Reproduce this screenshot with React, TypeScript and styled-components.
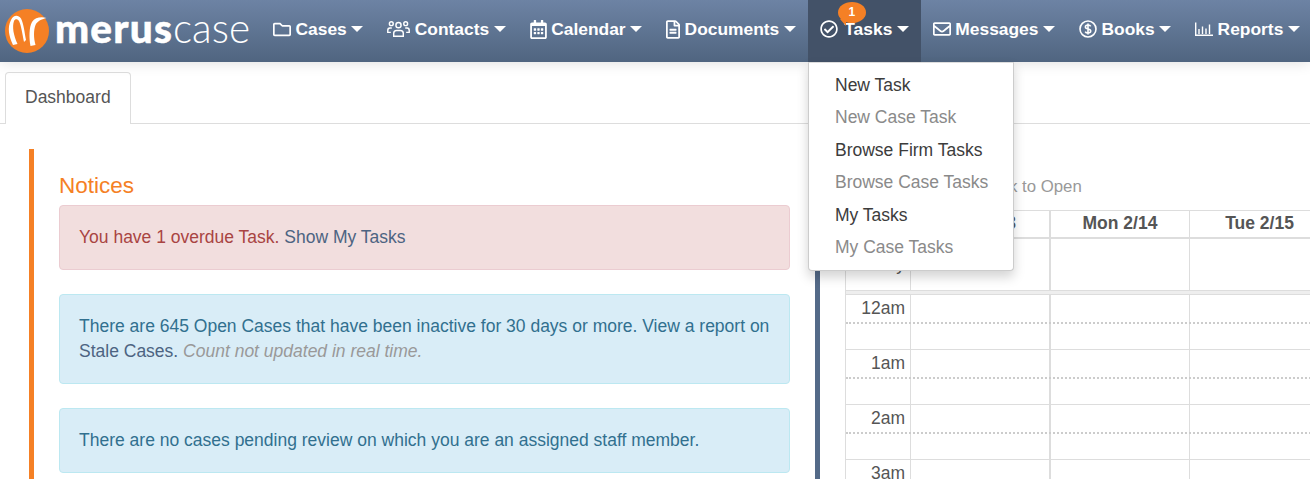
import React from 'react'
import styled, { createGlobalStyle } from 'styled-components'
import { FaRegFolder, FaRegCalendarAlt, FaRegFileAlt, FaRegCheckCircle, FaRegEnvelope } from 'react-icons/fa'

const GlobalStyle = createGlobalStyle`
    html, body {
        margin: 0;
        height: 479px;
        overflow: hidden;
        background: #fff;
    }
    body {
        font-family: "Liberation Sans", Arial, sans-serif;
        font-size: 17.5px;
        line-height: 25px;
        color: #555;
    }
`

const FolderIcon = styled(FaRegFolder)`
    width: 18px;
    height: 19px;
`

const CalendarIcon = styled(FaRegCalendarAlt)`
    width: 17px;
    height: 19px;
`

const DocumentIcon = styled(FaRegFileAlt)`
    width: 14px;
    height: 19px;
`

const CheckIcon = styled(FaRegCheckCircle)`
    width: 18px;
    height: 18px;
    margin-right: 2px;
`

const EnvelopeIcon = styled(FaRegEnvelope)`
    width: 18px;
    height: 18px;
`

const ContactsIcon = () => (
    <svg width="23" height="18" viewBox="0 0 24 18" fill="none" stroke="currentColor" strokeWidth="1.5">
        <circle cx="12" cy="5" r="2.7" />
        <circle cx="4.5" cy="3.5" r="2" />
        <circle cx="19.5" cy="3.5" r="2" />
        <path d="M7 16.500v-3c0-2 1.500-3 3-3h4c1.500 0 3 1 3 3v3z" />
        <path d="M5 8H3C1.800 8 .8 9 .8 10.500V12.500H4" />
        <path d="M19 8h2c1.200 0 2.200 1 2.200 2.500v2H20" />
    </svg>
)

const BooksIcon = () => (
    <svg width="18" height="18" viewBox="0 0 18 18" fill="none" stroke="currentColor" strokeWidth="1.6">
        <circle cx="9" cy="9" r="8" />
        <path d="M11.700 6.300C11.200 5.300 10.200 5 9 5 7.500 5 6.400 5.800 6.400 7c0 2.800 5.300 1.300 5.300 4 0 1.200-1.100 2-2.700 2-1.300 0-2.300-.4-2.800-1.400M9 3.500v11" />
    </svg>
)

const ReportsIcon = () => (
    <svg width="18" height="18" viewBox="0 0 18 18" fill="none" stroke="currentColor" strokeWidth="1.4">
        <path d="M.7 2.500V15.300H18" />
        <path d="M4 9v5M7.500 6.500V14M11 8.500V14M14.500 4.500V14" />
    </svg>
)

const navItems = [
    { label: 'Cases', icon: <FolderIcon /> },
    { label: 'Contacts', icon: <ContactsIcon /> },
    { label: 'Calendar', icon: <CalendarIcon /> },
    { label: 'Documents', icon: <DocumentIcon /> },
    { label: 'Tasks', icon: <CheckIcon />, active: true, badge: '1' },
    { label: 'Messages', icon: <EnvelopeIcon /> },
    { label: 'Books', icon: <BooksIcon /> },
    { label: 'Reports', icon: <ReportsIcon /> },
]

const menuItems = [
    { label: 'New Task' },
    { label: 'New Case Task', disabled: true },
    { label: 'Browse Firm Tasks' },
    { label: 'Browse Case Tasks', disabled: true },
    { label: 'My Tasks' },
    { label: 'My Case Tasks', disabled: true },
]

const hours = ['12am', '1am', '2am', '3am']

export default function App() {
    return (
        <>
            <GlobalStyle />
            <NavBar>
                <Brand>
                    <svg width="46" height="46" viewBox="0 0 46 46">
                        <circle cx="23" cy="23" r="22" fill="#f58025" />
                        <path d="M7 12C3 20 5 28 9 37L13.500 36C9.500 27 8 19 10 13C11 10.500 13.500 10.500 15 13C17 17 18.500 26 20 34L22 32C20.500 24 19.500 15 17 10.500C14 6.500 9.500 7 7 12Z" fill="#fff" />
                        <path d="M26.500 38L31.500 37C29.500 30 29.500 22 31.500 17C33.500 13 37 11.500 42.500 10C37 8.500 31 9.500 28 14C25 19 25 30 26.500 38Z" fill="#fff" />
                    </svg>
                    <BrandText>
                        <BrandBold>merus</BrandBold>
                        <BrandLight>case</BrandLight>
                    </BrandText>
                </Brand>
                <NavList>
                    {navItems.map(item => (
                        <NavItem key={item.label} $active={item.active}>
                            {item.icon}
                            <span>{item.label}</span>
                            <Caret />
                            {item.badge && <Badge>{item.badge}</Badge>}
                        </NavItem>
                    ))}
                    <DropMenu>
                        {menuItems.map(item => (
                            <MenuItem key={item.label} $disabled={item.disabled}>{item.label}</MenuItem>
                        ))}
                    </DropMenu>
                </NavList>
            </NavBar>
            <TabStrip>
                <Tab>Dashboard</Tab>
            </TabStrip>
            <Columns>
                <NoticesPanel>
                    <NoticesTitle>Notices</NoticesTitle>
                    <Alert $kind="danger">
                        You have 1 overdue Task. <AlertLink>Show My Tasks</AlertLink>
                    </Alert>
                    <Alert $kind="info">
                        There are 645 Open Cases that have been inactive for 30 days or more. View a report on{' '}
                        <AlertLink>Stale Cases.</AlertLink> <Muted>Count not updated in real time.</Muted>
                    </Alert>
                    <Alert $kind="info">
                        There are no cases pending review on which you are an assigned staff member.
                    </Alert>
                </NoticesPanel>
                <CalendarPanel>
                    <Hint>Click to Open</Hint>
                    <Calendar>
                        <HeaderRow>
                            <TimeCell />
                            <HeaderCell>Sun 2/13</HeaderCell>
                            <HeaderCell>Mon 2/14</HeaderCell>
                            <HeaderCell>Tue 2/15</HeaderCell>
                        </HeaderRow>
                        <AllDayRow>
                            <AllDayLabel>all-day</AllDayLabel>
                            <DayCell />
                            <DayCell />
                            <DayCell />
                        </AllDayRow>
                        <Divider />
                        {hours.map(hour => (
                            <HourRow key={hour}>
                                <TimeCell>{hour}</TimeCell>
                                <DayCell />
                                <DayCell />
                                <DayCell />
                            </HourRow>
                        ))}
                    </Calendar>
                </CalendarPanel>
            </Columns>
        </>
    )
}

const NavBar = styled.header`
    position: relative;
    z-index: 2;
    display: flex;
    height: 62px;
    background: linear-gradient(#6d83a4, #506580);
    box-shadow: 0 0 14px rgba(0, 0, 0, 0.14);
`

const Brand = styled.div`
    flex: none;
    display: flex;
    align-items: center;
    gap: 5px;
    width: 261px;
    padding-left: 4px;
    box-sizing: border-box;
`

const BrandText = styled.div`
    margin-top: -6px;
    font-family: Lato, "Open Sans", sans-serif;
    font-size: 40.5px;
    line-height: 46px;
    color: #fff;
    white-space: nowrap;
`

const BrandBold = styled.span`
    font-weight: 900;
    letter-spacing: 1.2px;
    -webkit-text-stroke: 0.5px #fff;
`

const BrandLight = styled.span`
    font-weight: 300;
`

const NavList = styled.nav`
    position: relative;
    flex: none;
    display: flex;
`

const NavItem = styled.div<{ $active?: boolean }>`
    position: relative;
    display: flex;
    align-items: center;
    gap: 4.5px;
    box-sizing: border-box;
    height: 62px;
    padding: 0 12px 4px;
    color: #fff;
    font-weight: 700;
    font-size: 17.4px;
    white-space: nowrap;
    background: ${props => (props.$active ? '#435268' : 'transparent')};

    svg {
        flex: none;
    }
`

const Caret = styled.i`
    width: 0;
    height: 0;
    border-top: 6px solid #fff;
    border-left: 6px solid transparent;
    border-right: 6px solid transparent;
`

const Badge = styled.b`
    position: absolute;
    top: 2px;
    left: 30px;
    width: 28px;
    height: 21px;
    border-radius: 50%;
    background: #f58025;
    color: #fff;
    font-size: 12px;
    line-height: 21px;
    text-align: center;

    &::after {
        content: '';
        position: absolute;
        left: 2px;
        bottom: -3px;
        width: 0;
        height: 0;
        border-top: 7px solid #f58025;
        border-left: 6px solid transparent;
    }
`

const DropMenu = styled.div`
    position: absolute;
    top: 62px;
    left: 547px;
    box-sizing: border-box;
    width: 206px;
    height: 209px;
    padding: 7px 0;
    background: #fff;
    border: 1px solid #ccc;
    border-top-color: #ddd;
    border-radius: 0 0 4px 4px;
    box-shadow: 0 6px 12px rgba(0, 0, 0, 0.175);
`

const MenuItem = styled.div<{ $disabled?: boolean }>`
    height: 32.4px;
    padding-left: 26px;
    font-size: 17.5px;
    line-height: 30px;
    color: ${props => (props.$disabled ? '#8a8a8a' : '#3c3c3c')};
`

const TabStrip = styled.div`
    display: flex;
    height: 62px;
    padding: 10px 0 0 5px;
    box-sizing: border-box;
    border-bottom: 1px solid #ddd;
`

const Tab = styled.div`
    box-sizing: border-box;
    width: 126px;
    height: 52px;
    padding: 12px 0 0 19px;
    background: #fff;
    border: 1px solid #ddd;
    border-bottom: none;
    border-radius: 4px 4px 0 0;
    color: #555;
`

const Columns = styled.main`
    display: flex;
    gap: 25px;
    box-sizing: border-box;
    height: 355px;
    padding: 25px 0 0 29px;
    overflow: hidden;
`

const NoticesPanel = styled.section`
    box-sizing: border-box;
    flex: none;
    width: 761px;
    padding: 24px 0 0 25px;
    border-left: 5px solid #f58025;
`

const NoticesTitle = styled.h2`
    margin: 0 0 7px;
    font-size: 22.5px;
    font-weight: 400;
    line-height: 25px;
    color: #f58025;
`

const Alert = styled.div<{ $kind: 'danger' | 'info' }>`
    margin-bottom: 24px;
    padding: 19px;
    border: 1px solid ${props => (props.$kind === 'danger' ? '#ebccd1' : '#bce8f1')};
    border-radius: 4px;
    background: ${props => (props.$kind === 'danger' ? '#f2dede' : '#d9edf7')};
    color: ${props => (props.$kind === 'danger' ? '#a94442' : '#31708f')};
`

const AlertLink = styled.a`
    color: #4d6482;
`

const Muted = styled.em`
    color: #999;
`

const CalendarPanel = styled.section`
    box-sizing: border-box;
    flex: none;
    width: 495px;
    padding-left: 25px;
    border-left: 5px solid #546a88;
`

const Hint = styled.div`
    height: 61px;
    padding: 25px 0 0 136px;
    box-sizing: border-box;
    font-size: 16.8px;
    color: #999;
`

const Calendar = styled.div`
    width: 485px;
    border-top: 1px solid #ddd;
    border-left: 1px solid #ddd;
`

const Row = styled.div`
    display: grid;
    grid-template-columns: 65px 140px 139px 140px;

    & > :nth-child(2) {
        border-right-width: 2px;
    }
`

const HeaderRow = styled(Row)`
    height: 26px;
    border-bottom: 2px solid #ddd;
`

const AllDayRow = styled(Row)`
    height: 51px;
`

const Divider = styled.div`
    box-sizing: border-box;
    height: 5px;
    background: #eee;
    border-top: 1px solid #ddd;
    border-bottom: 1px solid #ddd;
`

const HourRow = styled(Row)`
    position: relative;
    height: 54px;
    border-bottom: 1px solid #ddd;

    &::after {
        content: '';
        position: absolute;
        left: 0;
        right: 0;
        top: 27px;
        border-top: 2px dotted #ccc;
    }
`

const TimeCell = styled.div`
    padding-right: 5px;
    border-right: 1px solid #ddd;
    text-align: right;
    line-height: 26px;
    color: #555;
`

const AllDayLabel = styled(TimeCell)`
    padding-top: 12px;
`

const HeaderCell = styled.div`
    border-right: 1px solid #ddd;
    text-align: center;
    font-weight: 700;
    line-height: 24px;
    color: #555;
`

const DayCell = styled.div`
    border-right: 1px solid #ddd;
`
